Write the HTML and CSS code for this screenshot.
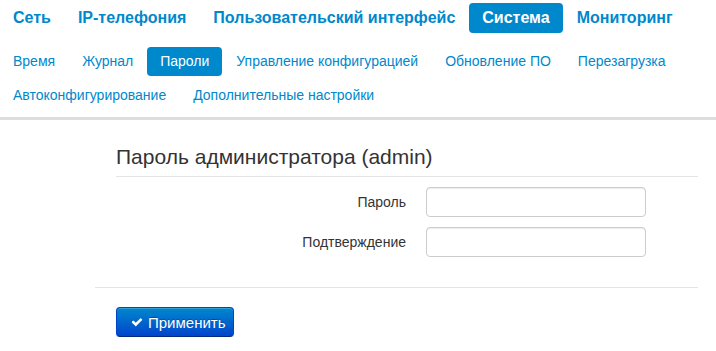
FILE: index.html
```html
<!DOCTYPE html>
<html lang="ru">
<head>
<meta charset="utf-8">
<title>Система — Пароли</title>
<link rel="stylesheet" href="styles.css">
</head>
<body>
<header class="header">
  <nav class="main-nav">
    <a class="main-item" href="#">Сеть</a>
    <a class="main-item" href="#">IP-телефония</a>
    <a class="main-item" href="#">Пользовательский интерфейс</a>
    <a class="main-item active" href="#">Система</a>
    <a class="main-item" href="#">Мониторинг</a>
  </nav>
  <nav class="sub-nav">
    <a class="sub-item" href="#">Время</a>
    <a class="sub-item" href="#">Журнал</a>
    <a class="sub-item active" href="#">Пароли</a>
    <a class="sub-item" href="#">Управление конфигурацией</a>
    <a class="sub-item" href="#">Обновление ПО</a>
    <a class="sub-item" href="#">Перезагрузка</a>
    <a class="sub-item" href="#">Автоконфигурирование</a>
    <a class="sub-item" href="#">Дополнительные настройки</a>
  </nav>
</header>
<main class="content">
  <form class="form">
    <section class="fieldset">
      <h2 class="legend">Пароль администратора (admin)</h2>
      <div class="row">
        <label class="label" for="pw">Пароль</label>
        <input class="input" id="pw" type="password">
      </div>
      <div class="row">
        <label class="label" for="pw2">Подтверждение</label>
        <input class="input" id="pw2" type="password">
      </div>
    </section>
    <div class="actions">
      <button class="btn" type="button">
        <svg class="icon" viewBox="0 0 1792 1792" aria-hidden="true"><path d="M1671 566q0 40-28 68l-724 724-136 136q-28 28-68 28t-68-28l-136-136-362-362q-28-28-28-68t28-68l136-136q28-28 68-28t68 28l294 295 656-657q28-28 68-28t68 28l136 136q28 28 28 68z"/></svg>
        Применить
      </button>
    </div>
  </form>
</main>
</body>
</html>
```
FILE: styles.css
```css
* { box-sizing: border-box; }
html, body { margin: 0; padding: 0; background: #fff; }
body {
  font-family: "Liberation Sans", Arial, sans-serif;
  color: #333;
  font-size: 14px;
}
a { text-decoration: none; }

.header {
  padding-top: 3px;
  border-bottom: 3px solid #dddddd;
  padding-bottom: 7px;
}
.main-nav {
  display: flex;
  gap: 1px;
}
.main-item {
  display: block;
  height: 30px;
  line-height: 30px;
  padding: 0 13px;
  font-size: 16px;
  font-weight: bold;
  color: #0088cc;
  border-radius: 4px;
}
.main-item.active {
  background: #0088cc;
  color: #fff;
}
.sub-nav {
  margin-top: 14px;
  display: flex;
  flex-wrap: wrap;
  column-gap: 1px;
  row-gap: 5px;
}
.sub-item {
  display: block;
  height: 29px;
  line-height: 29px;
  padding: 0 13px;
  font-size: 14px;
  color: #0088cc;
  border-radius: 4px;
}
.sub-item.active {
  background: #0088cc;
  color: #fff;
}

.content {
  padding: 0 18px 0 95px;
}
.fieldset {
  padding-left: 21px;
}
.legend {
  margin: 0;
  padding-top: 25px;
  padding-bottom: 7px;
  font-size: 21px;
  line-height: 24px;
  font-weight: normal;
  color: #333;
  border-bottom: 1px solid #e5e5e5;
  margin-bottom: 10px;
}
.row {
  display: flex;
  align-items: center;
  margin-bottom: 10px;
}
.label {
  width: 310px;
  text-align: right;
  font-size: 14px;
  color: #333;
  padding-right: 20px;
}
.input {
  width: 220px;
  height: 30px;
  border: 1px solid #cccccc;
  border-radius: 4px;
  background: #fff;
  box-shadow: inset 0 1px 1px rgba(0,0,0,0.075);
  padding: 4px 6px;
  font-size: 14px;
}
.actions {
  margin-top: 30px;
  border-top: 1px solid #e5e5e5;
  padding: 19px 0 0 21px;
}
.btn {
  display: inline-flex;
  align-items: center;
  gap: 5px;
  width: 118px;
  height: 30px;
  padding: 0 0 0 14px;
  border: 1px solid #0044cc;
  border-color: #0044cc #0044cc #002a80;
  border-radius: 4px;
  background: linear-gradient(#0088cc, #0044cc);
  color: #fff;
  font-family: "Liberation Sans", Arial, sans-serif;
  font-size: 15px;
  text-shadow: 0 -1px 0 rgba(0,0,0,0.25);
  box-shadow: inset 0 1px 0 rgba(255,255,255,0.2), 0 1px 2px rgba(0,0,0,0.05);
}
.icon {
  width: 12px;
  height: 12px;
  fill: #fff;
}
```
